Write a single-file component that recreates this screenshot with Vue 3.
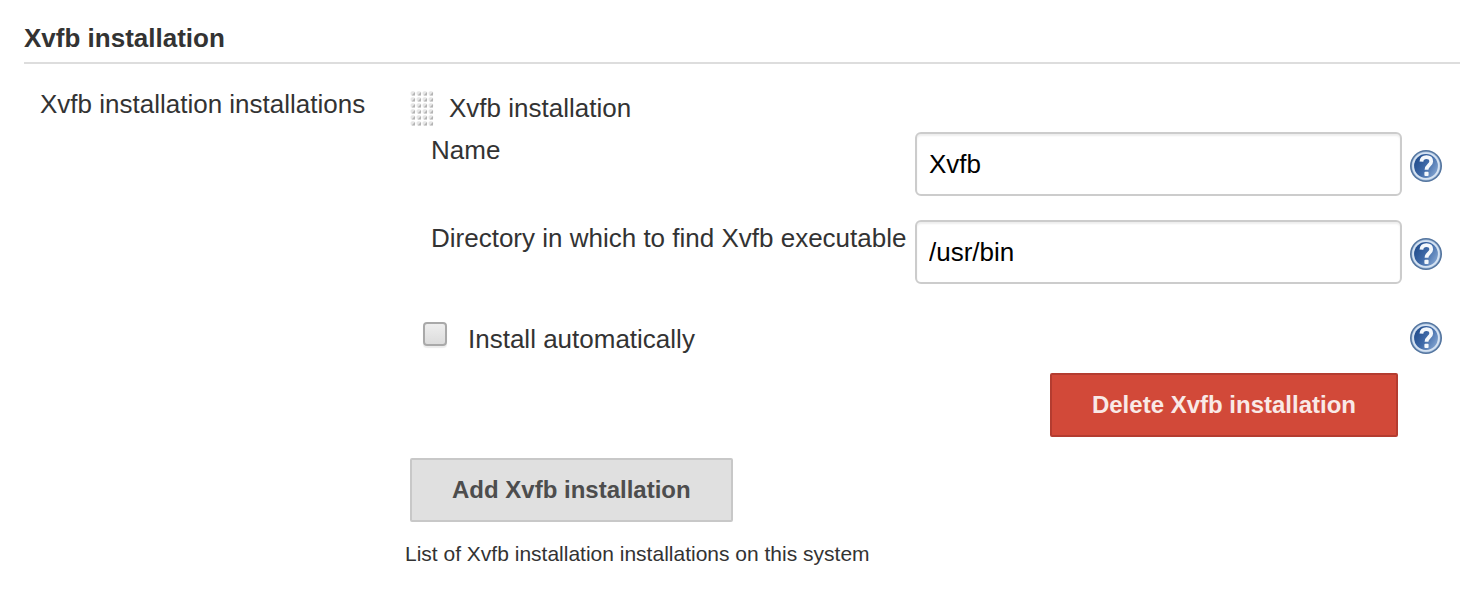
<script setup>
import { ref } from 'vue'

const fields = ref([
  { id: 'name', label: 'Name', value: 'Xvfb' },
  { id: 'home', label: 'Directory in which to find Xvfb executable', value: '/usr/bin' }
])
const auto = ref(false)
</script>

<template>
  <main class="page">
    <svg class="defs" width="0" height="0" aria-hidden="true">
      <defs>
        <linearGradient id="disc" x1="0" y1="0.2" x2="1" y2="0.8">
          <stop offset="0" stop-color="#1f4a8a" />
          <stop offset="0.5" stop-color="#3f6aa8" />
          <stop offset="1" stop-color="#86a7d2" />
        </linearGradient>
        <symbol id="help" viewBox="0 0 32 32">
          <circle cx="16" cy="16" r="16" fill="#54759f" />
          <circle cx="16" cy="16" r="14.4" fill="#9db8d8" />
          <circle cx="16" cy="16" r="13.8" fill="#d6e3f2" />
          <circle cx="16" cy="16" r="11.9" fill="url(#disc)" />
          <path d="M11.4 11.6C11.7 8.7 13.5 7.2 16.4 7.2C19.4 7.2 21.2 8.9 21.2 11.5C21.2 15.1 16.5 15.3 16.5 19.8" fill="none" stroke="#f4f8fc" stroke-width="3.8" />
          <rect x="14.4" y="21.7" width="4.2" height="4.2" rx="1" fill="#f4f8fc" />
        </symbol>
      </defs>
    </svg>

    <h1 class="title">Xvfb installation</h1>

    <section class="section">
      <div class="section-label">Xvfb installation installations</div>
      <div class="content">
        <div class="item-head">
          <svg class="handle" width="24" height="36" viewBox="0 0 24 36" aria-hidden="true">
            <defs>
              <pattern id="dots" width="6" height="6" patternUnits="userSpaceOnUse">
                <rect x="0.6" y="1.2" width="4.6" height="4.4" rx="1.6" fill="#e6e6e6" />
                <path d="M5 2V5.4H1.6Z" fill="#b4b4b4" />
              </pattern>
            </defs>
            <rect width="24" height="36" fill="url(#dots)" />
          </svg>
          <span>Xvfb installation</span>
        </div>

        <div v-for="f in fields" :key="f.id" class="field">
          <label class="field-label" :for="f.id">{{ f.label }}</label>
          <input :id="f.id" v-model="f.value" class="text" type="text" />
          <button class="help" type="button" :aria-label="'Help for ' + f.label">
            <svg width="32" height="32"><use href="#help" /></svg>
          </button>
        </div>

        <div class="auto">
          <input id="auto" v-model="auto" class="check" type="checkbox" />
          <label class="auto-label" for="auto">Install automatically</label>
          <button class="help" type="button" aria-label="Help for Install automatically">
            <svg width="32" height="32"><use href="#help" /></svg>
          </button>
        </div>

        <div class="remove">
          <button class="btn danger" type="button">Delete Xvfb installation</button>
        </div>
        <button class="btn" type="button">Add Xvfb installation</button>
        <p class="note">List of Xvfb installation installations on this system</p>
      </div>
    </section>
  </main>
</template>

<style>
body {
  margin: 0;
  background: #fff;
}
</style>

<style scoped>
.page {
  padding: 23px 21px 24px 24px;
  color: #333;
  font: 26px/30px "Liberation Sans", Arial, sans-serif;
}
.defs {
  position: absolute;
}
.title {
  margin: 0;
  padding-bottom: 9px;
  border-bottom: 2px solid #ddd;
  font-size: 26px;
  line-height: 30px;
}
.section {
  display: grid;
  grid-template-columns: 365px 1fr;
  padding: 25px 18px 0 16px;
}
.content {
  padding: 1px 0 0 5px;
}
.item-head {
  display: flex;
  align-items: center;
  gap: 15px;
  height: 36px;
  margin-bottom: 6px;
}
.field {
  display: grid;
  grid-template-columns: 476px 1fr 32px;
  column-gap: 8px;
  align-items: center;
  margin: 0 0 24px 21px;
}
.field-label {
  align-self: start;
  padding-top: 3px;
}
.text {
  box-sizing: border-box;
  width: 100%;
  min-width: 0;
  height: 64px;
  padding: 0 12px;
  border: 2px solid #ccc;
  border-radius: 6px;
  background: #fff;
  box-shadow: inset 0 2px 2px rgba(0, 0, 0, 0.07);
  color: #000;
  font: inherit;
}
.help {
  width: 32px;
  height: 32px;
  padding: 0;
  border: 0;
  background: none;
}
.field .help {
  margin-top: 4px;
}
.help svg {
  display: block;
}
.auto {
  display: flex;
  align-items: flex-start;
  margin: 38px 0 19px 13px;
}
.check {
  appearance: none;
  box-sizing: border-box;
  width: 24px;
  height: 24px;
  margin: 0 21px 0 0;
  border: 2px solid #a9a9a9;
  border-radius: 4px;
  background: linear-gradient(#eee, #dcdcdc);
  box-shadow: 0 2px 1px rgba(0, 0, 0, 0.08);
}
.check:checked {
  background: #777;
}
.auto-label {
  flex: 1;
  padding-top: 2px;
}
.remove {
  display: flex;
  justify-content: flex-end;
  margin: 0 44px 21px 0;
}
.btn {
  height: 64px;
  padding: 0 40px;
  border: 2px solid #c8c8c8;
  border-radius: 2px;
  background: #e0e0e0;
  color: #4d4d4d;
  font: bold 24px/28px "Liberation Sans", Arial, sans-serif;
}
.danger {
  border-color: #b43c30;
  background: #d24939;
  color: #f9e9e7;
}
.note {
  margin: 20px 0 0 -5px;
  font-size: 21px;
  line-height: 24px;
}
</style>
